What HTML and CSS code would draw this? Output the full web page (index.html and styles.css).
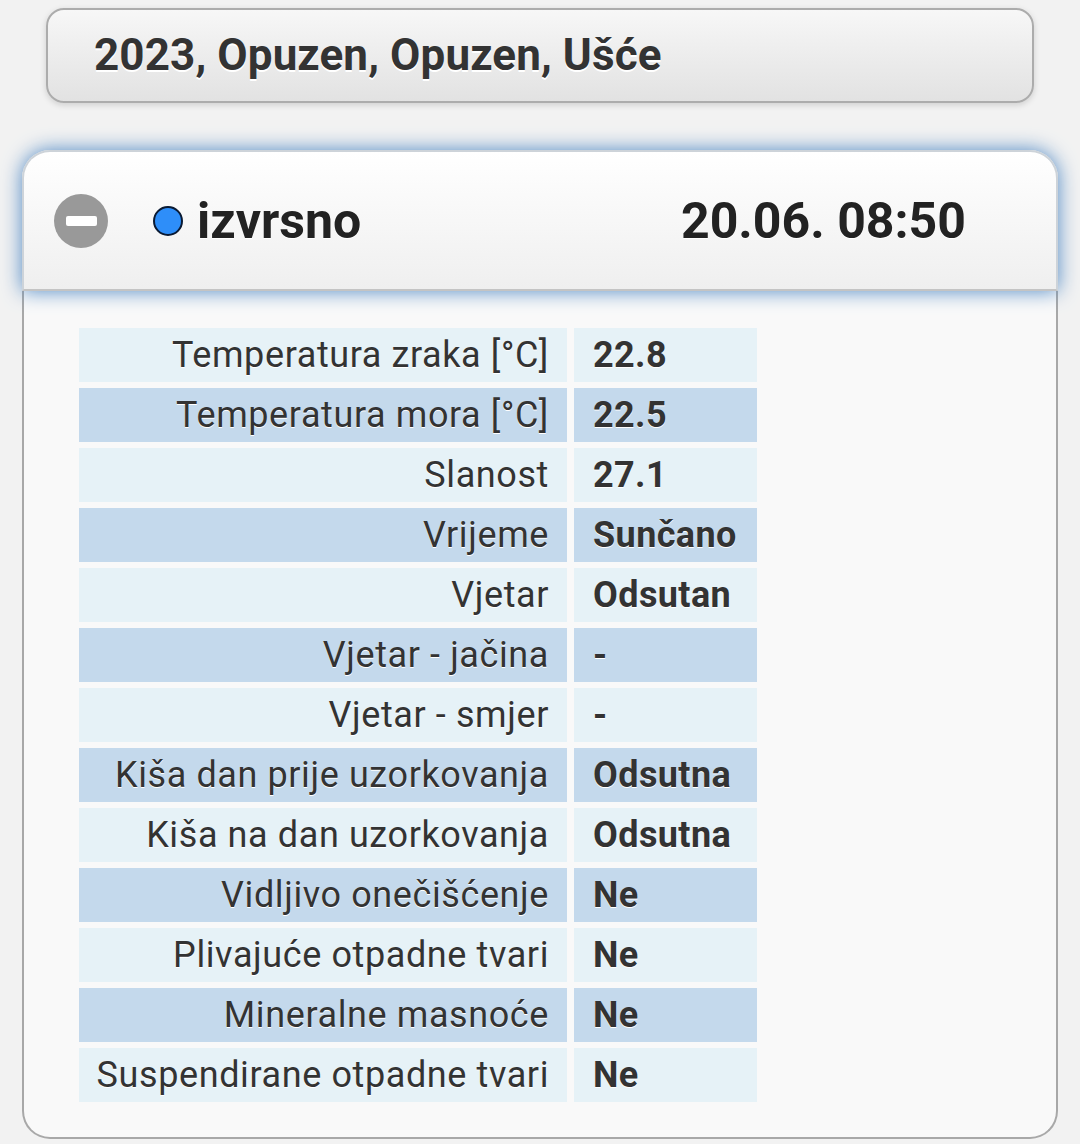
FILE: index.html
```html
<!DOCTYPE html>
<html lang="hr">
<head>
<meta charset="utf-8">
<title>2023, Opuzen, Opuzen, Ušće</title>
<link rel="stylesheet" href="styles.css">
</head>
<body>
<div class="page">
  <div class="title-btn"><span class="title-text">2023, Opuzen, Opuzen, Ušće</span></div>

  <div class="collapsible">
    <div class="coll-head">
      <span class="minus-icon"><span class="minus-bar"></span></span>
      <span class="dot"></span>
      <span class="status">izvrsno</span>
      <span class="date">20.06. 08:50</span>
    </div>
    <div class="coll-body">
      <table class="data">
        <tr class="odd"><td class="lbl">Temperatura zraka [°C]</td><td class="val">22.8</td></tr>
        <tr class="even"><td class="lbl">Temperatura mora [°C]</td><td class="val">22.5</td></tr>
        <tr class="odd"><td class="lbl">Slanost</td><td class="val">27.1</td></tr>
        <tr class="even"><td class="lbl">Vrijeme</td><td class="val">Sunčano</td></tr>
        <tr class="odd"><td class="lbl">Vjetar</td><td class="val">Odsutan</td></tr>
        <tr class="even"><td class="lbl">Vjetar - jačina</td><td class="val">-</td></tr>
        <tr class="odd"><td class="lbl">Vjetar - smjer</td><td class="val">-</td></tr>
        <tr class="even"><td class="lbl">Kiša dan prije uzorkovanja</td><td class="val">Odsutna</td></tr>
        <tr class="odd"><td class="lbl">Kiša na dan uzorkovanja</td><td class="val">Odsutna</td></tr>
        <tr class="even"><td class="lbl">Vidljivo onečišćenje</td><td class="val">Ne</td></tr>
        <tr class="odd"><td class="lbl">Plivajuće otpadne tvari</td><td class="val">Ne</td></tr>
        <tr class="even"><td class="lbl">Mineralne masnoće</td><td class="val">Ne</td></tr>
        <tr class="odd"><td class="lbl">Suspendirane otpadne tvari</td><td class="val">Ne</td></tr>
      </table>
    </div>
  </div>
</div>
</body>
</html>
```

FILE: styles.css
```css
html, body {
  margin: 0;
  padding: 0;
}
body {
  background: #f2f2f2;
  font-family: Roboto, "Noto Sans", "DejaVu Sans", sans-serif;
  color: #333;
}
.page {
  padding: 8px 22px 6px 22px;
}
.title-btn {
  margin: 0 24px;
  height: 91px;
  border: 2px solid #acacac;
  border-radius: 18px;
  background: linear-gradient(#f7f7f7, #e2e2e2);
  box-shadow: 0 2px 6px rgba(0,0,0,0.15);
  display: flex;
  align-items: center;
  padding-left: 46px;
}
.title-text {
  font-weight: 700;
  font-size: 44px;
  letter-spacing: 0.1px;
  color: #333;
  text-shadow: 0 2px 0 #fff;
  margin-top: -1px;
}
.collapsible {
  margin-top: 47px;
}
.coll-head {
  height: 137px;
  border: 2px solid #cdd3d9;
  border-bottom-color: #c4c4c4;
  border-radius: 28px 28px 0 0;
  background: linear-gradient(#ffffff, #efefef);
  box-shadow: 0 0 20px #4f88c4;
  display: flex;
  align-items: center;
  padding-left: 30px;
  position: relative;
  z-index: 1;
  color: #222;
}
.minus-icon {
  width: 54px;
  height: 54px;
  border-radius: 50%;
  background: #999;
  display: flex;
  align-items: center;
  justify-content: center;
  flex: none;
}
.minus-bar {
  width: 31px;
  height: 10px;
  background: #fff;
  border-radius: 2px;
}
.dot {
  width: 26px;
  height: 26px;
  border-radius: 50%;
  background: #2e8ef9;
  border: 2px solid #0a1a33;
  margin-left: 45px;
  flex: none;
}
.status {
  font-weight: 700;
  font-size: 50px;
  margin-left: 14px;
  text-shadow: 0 1px 0 #fff;
}
.date {
  font-weight: 700;
  font-size: 50px;
  margin-left: auto;
  margin-right: 90px;
  text-shadow: 0 1px 0 #fff;
}
.coll-body {
  background: #f9f9f9;
  border: 2px solid #a8a8a8;
  border-top: none;
  border-radius: 0 0 28px 28px;
  padding: 31px 48px 29px 48px;
}
.data {
  border-spacing: 7px 6px;
}
.data td {
  height: 54px;
  padding: 0;
  font-size: 36px;
  text-shadow: 0 1px 0 #fff;
}
.odd td {
  background: #e6f2f7;
}
.even td {
  background: #c4d9ec;
}
.lbl {
  width: 470px;
  text-align: right;
  padding-right: 18px !important;
  letter-spacing: 0.6px;
}
.val {
  width: 164px;
  padding-left: 19px !important;
  font-weight: 700;
  letter-spacing: 0.4px;
}
```
